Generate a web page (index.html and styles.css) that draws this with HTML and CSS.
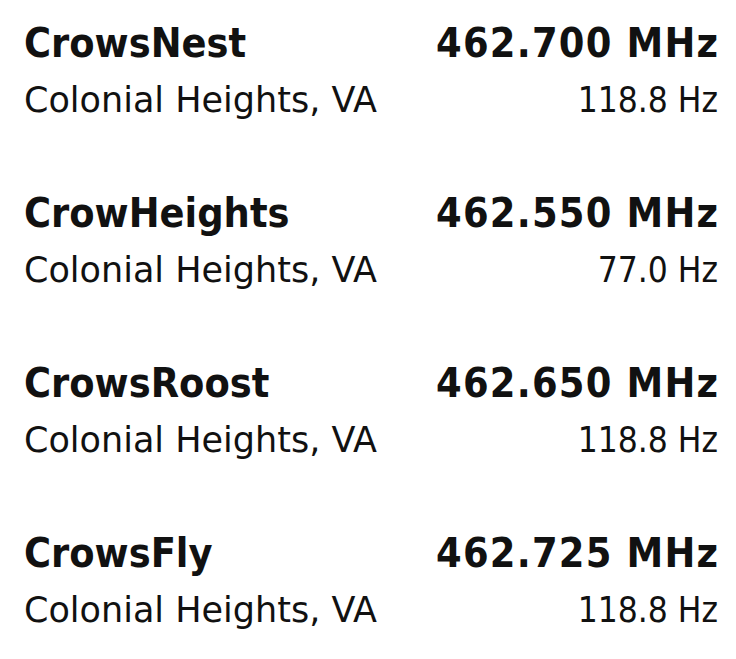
FILE: index.html
```html
<!DOCTYPE html>
<html>
<head>
<meta charset="utf-8">
<link rel="stylesheet" href="styles.css">
</head>
<body>
<ul class="list">
  <li class="item">
    <div class="row"><span class="name">CrowsNest</span><span class="freq">462.700 MHz</span></div>
    <div class="row sub"><span class="loc">Colonial Heights, VA</span><span class="tone">118.8 Hz</span></div>
  </li>
  <li class="item">
    <div class="row"><span class="name">CrowHeights</span><span class="freq">462.550 MHz</span></div>
    <div class="row sub"><span class="loc">Colonial Heights, VA</span><span class="tone">77.0 Hz</span></div>
  </li>
  <li class="item">
    <div class="row"><span class="name">CrowsRoost</span><span class="freq">462.650 MHz</span></div>
    <div class="row sub"><span class="loc">Colonial Heights, VA</span><span class="tone">118.8 Hz</span></div>
  </li>
  <li class="item">
    <div class="row"><span class="name">CrowsFly</span><span class="freq">462.725 MHz</span></div>
    <div class="row sub"><span class="loc">Colonial Heights, VA</span><span class="tone">118.8 Hz</span></div>
  </li>
</ul>
</body>
</html>
```
FILE: styles.css
```css
html, body {
  margin: 0;
  padding: 0;
  background: #ffffff;
}
body {
  font-family: "DejaVu Sans", sans-serif;
  color: #111111;
}
.list {
  list-style: none;
  margin: 0;
  padding: 19px 18px 0 24px;
  display: flex;
  flex-direction: column;
  gap: 68px;
}
.item {
  display: flex;
  flex-direction: column;
  gap: 12px;
}
.row {
  display: flex;
  justify-content: space-between;
  align-items: baseline;
  font-size: 41px;
  line-height: 48px;
  font-weight: bold;
  font-stretch: condensed;
  white-space: nowrap;
}
.freq {
  letter-spacing: 1.2px;
  margin-right: -1.2px;
}
.row.sub {
  font-size: 35px;
  line-height: 42px;
  font-weight: normal;
  font-stretch: normal;
}
.row.sub .tone {
  font-stretch: condensed;
}
```
